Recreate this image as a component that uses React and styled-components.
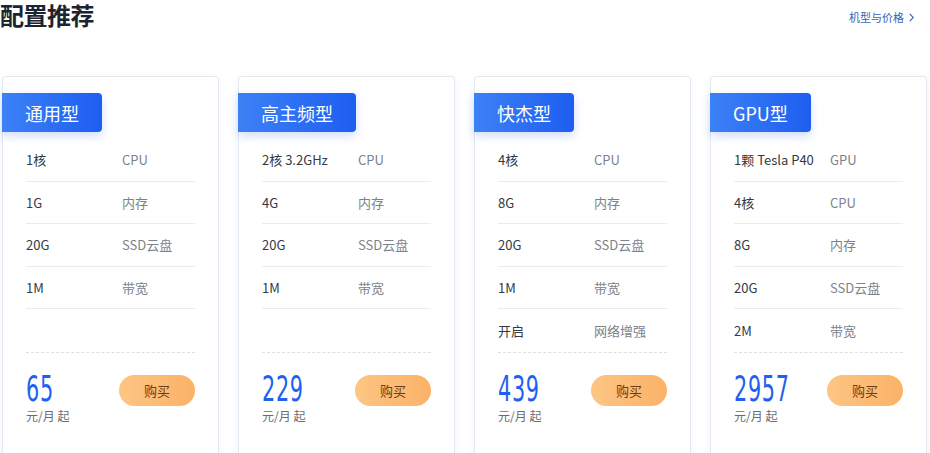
import React from "react";
import styled, { createGlobalStyle } from "styled-components";

const GlobalStyle = createGlobalStyle`
  html, body {
    margin: 0;
    padding: 0;
    background: #ffffff;
    font-family: "Noto Sans CJK SC", "Noto Sans", sans-serif;
  }
`;

const Page = styled.div`
  width: 930px;
  height: 453px;
  overflow: hidden;
`;

const Header = styled.div`
  display: flex;
  justify-content: space-between;
  align-items: flex-start;
  height: 76px;
  padding-top: 1px;
  box-sizing: border-box;
`;

const Title = styled.h2`
  margin: 0;
  font-size: 24px;
  line-height: 28px;
  font-weight: 700;
  color: #1b2430;
  letter-spacing: -0.5px;
`;

const MoreLink = styled.a`
  display: flex;
  align-items: center;
  gap: 5px;
  margin: 7px 16px 0 0;
  font-size: 11px;
  line-height: 18px;
  color: #3c5fb4;
  text-decoration: none;
`;

const Cards = styled.div`
  display: grid;
  grid-template-columns: repeat(4, 217px);
  column-gap: 19px;
  padding-left: 2px;
`;

const Card = styled.div`
  background: #fff;
  border: 1px solid #e4e8f1;
  border-radius: 4px;
  box-shadow: 0 2px 8px rgba(40, 80, 160, 0.06);
  padding: 16px 0 60px;
`;

const Tag = styled.div`
  display: inline-flex;
  align-items: center;
  height: 39px;
  padding: 0 23px;
  margin-left: -1px;
  font-size: 18px;
  color: #fff;
  background: linear-gradient(90deg, #3d81f6 0%, #1d5ef0 100%);
  border-radius: 0 4px 4px 0;
  box-shadow: 0 4px 10px rgba(40, 100, 240, 0.22);
`;

const Specs = styled.div`
  margin: 7px 23px 0;
  height: 213px;
  border-bottom: 1px dashed #dcdfe6;
`;

const Row = styled.div`
  display: flex;
  align-items: center;
  height: 42.5px;
  box-sizing: border-box;
  border-bottom: 1px solid #e9ebef;
  font-size: 13px;

  &:nth-child(5) {
    border-bottom: none;
  }
`;

const Value = styled.span`
  width: 96px;
  color: #333a44;
`;

const Label = styled.span`
  color: #7c828c;
`;

const Footer = styled.div`
  display: flex;
  justify-content: space-between;
  align-items: flex-start;
  margin: 21px 23px 0;
`;

const Price = styled.div`
  display: flex;
  flex-direction: column;
  align-items: flex-start;
`;

const Amount = styled.span`
  font-family: "Liberation Sans Narrow", "DejaVu Sans Condensed", sans-serif;
  font-size: 35px;
  line-height: 31px;
  color: #1f5ff2;
  transform: scaleX(0.66);
  transform-origin: left center;
  letter-spacing: 1px;
`;

const Unit = styled.span`
  margin-top: 3px;
  font-size: 12px;
  line-height: 16px;
  color: #666c75;
`;

const BuyButton = styled.button`
  width: 76px;
  height: 31px;
  margin-top: 1px;
  border: none;
  border-radius: 16px;
  background: linear-gradient(90deg, #fdc584 0%, #fbb268 100%);
  color: #6a3c17;
  font-family: inherit;
  font-size: 13px;
  cursor: pointer;
`;

const plans = [
  {
    name: "通用型",
    specs: [
      ["1核", "CPU"],
      ["1G", "内存"],
      ["20G", "SSD云盘"],
      ["1M", "带宽"],
    ],
    price: "65",
  },
  {
    name: "高主频型",
    specs: [
      ["2核 3.2GHz", "CPU"],
      ["4G", "内存"],
      ["20G", "SSD云盘"],
      ["1M", "带宽"],
    ],
    price: "229",
  },
  {
    name: "快杰型",
    specs: [
      ["4核", "CPU"],
      ["8G", "内存"],
      ["20G", "SSD云盘"],
      ["1M", "带宽"],
      ["开启", "网络增强"],
    ],
    price: "439",
  },
  {
    name: "GPU型",
    specs: [
      ["1颗 Tesla P40", "GPU"],
      ["4核", "CPU"],
      ["8G", "内存"],
      ["20G", "SSD云盘"],
      ["2M", "带宽"],
    ],
    price: "2957",
  },
];

function Chevron() {
  return (
    <svg width="5" height="9" viewBox="0 0 5 9" fill="none">
      <path d="M0.8 0.8l3.5 3.7-3.5 3.7" stroke="#3c5fb4" strokeWidth="1.1" />
    </svg>
  );
}

export default function App() {
  return (
    <Page>
      <GlobalStyle />
      <Header>
        <Title>配置推荐</Title>
        <MoreLink href="#">
          机型与价格
          <Chevron />
        </MoreLink>
      </Header>
      <Cards>
        {plans.map((plan) => (
          <Card key={plan.name}>
            <Tag>{plan.name}</Tag>
            <Specs>
              {plan.specs.map(([v, l]) => (
                <Row key={l}>
                  <Value>{v}</Value>
                  <Label>{l}</Label>
                </Row>
              ))}
            </Specs>
            <Footer>
              <Price>
                <Amount>{plan.price}</Amount>
                <Unit>元/月 起</Unit>
              </Price>
              <BuyButton>购买</BuyButton>
            </Footer>
          </Card>
        ))}
      </Cards>
    </Page>
  );
}
